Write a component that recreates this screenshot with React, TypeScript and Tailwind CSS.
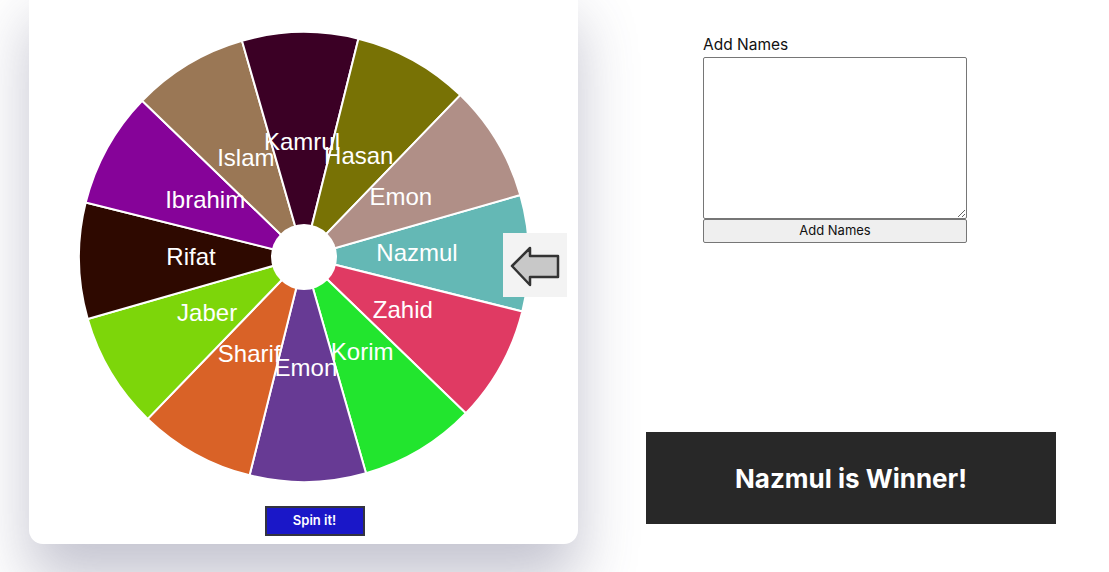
import { useState } from "react";

const segments = [
  { name: "Nazmul", color: "#64b8b5" },
  { name: "Zahid", color: "#e03a63" },
  { name: "Korim", color: "#22e52e" },
  { name: "Emon", color: "#673a94" },
  { name: "Sharif", color: "#d96227" },
  { name: "Jaber", color: "#7dd60a" },
  { name: "Rifat", color: "#2e0900" },
  { name: "Ibrahim", color: "#860399" },
  { name: "Islam", color: "#9a7755" },
  { name: "Kamrul", color: "#3b0025" },
  { name: "Hasan", color: "#787205" },
  { name: "Emon", color: "#b08f87" },
];

const SIZE = 452;
const C = SIZE / 2;
const R = 225;
const OFFSET = -1;

const rad = (deg: number) => (deg * Math.PI) / 180;

const Wheel = () => {
  const step = 360 / segments.length;
  return (
    <svg width={SIZE} height={SIZE} viewBox={`0 0 ${SIZE} ${SIZE}`}>
      {segments.map((seg, i) => {
        const a0 = rad(OFFSET + step * i - step / 2);
        const a1 = rad(OFFSET + step * i + step / 2);
        const d = `M${C},${C} L${C + R * Math.cos(a0)},${C + R * Math.sin(a0)} A${R},${R} 0 0 1 ${C + R * Math.cos(a1)},${C + R * Math.sin(a1)} Z`;
        return <path key={i} d={d} fill={seg.color} stroke="#ffffff" strokeWidth={2} />;
      })}
      {segments.map((seg, i) => {
        const a = rad(OFFSET + step * i);
        return (
          <text
            key={i}
            x={C + 113 * Math.cos(a)}
            y={C + 113 * Math.sin(a) + 6}
            textAnchor="middle"
            fill="#ffffff"
            fontSize={24}
            fontFamily='"Liberation Sans", Arial, sans-serif'
          >
            {seg.name}
          </text>
        );
      })}
      <circle cx={C} cy={C} r={33} fill="#ffffff" />
    </svg>
  );
};

export default function App() {
  const [names, setNames] = useState("");

  return (
    <div className="w-[1109px] h-[572px] overflow-hidden bg-white flex" style={{ fontFamily: "Inter, 'Open Sans', sans-serif" }}>
      {/* wheel card */}
      <div className="relative ml-[29px] mt-[-16px] w-[549px] h-[560px] shrink-0 bg-white rounded-[14px] shadow-[0_36px_60px_0_rgba(70,70,110,0.32)] flex flex-col items-center pt-[47px]">
        <Wheel />
        <button className="mt-[23px] ml-[22px] w-[100px] h-[30px] bg-[#1a17c8] border-2 border-[#333340] text-white text-[13px] font-semibold">
          Spin it!
        </button>
        <div className="absolute left-[474px] top-[249px] w-[64px] h-[64px] bg-[#f3f3f3]">
          <svg width="64" height="64" viewBox="0 0 64 64">
            <polygon
              points="9,33 27,15 27,23 55,23 55,44 27,44 27,52"
              fill="#c8c8c8"
              stroke="#333333"
              strokeWidth={2.5}
              strokeLinejoin="round"
            />
          </svg>
        </div>
      </div>

      {/* right side */}
      <div className="flex flex-col">
        <div className="ml-[125px] mt-[34px] w-[264px] flex flex-col">
          <label className="text-[15.5px] leading-[22px] text-[#111]">Add Names</label>
          <textarea
            value={names}
            onChange={(e) => setNames(e.target.value)}
            className="mt-[1px] h-[162px] w-[264px] border border-[#767676] rounded-[2px] bg-white"
          />
          <button className="h-[24px] w-[264px] border border-[#767676] rounded-[2px] bg-[#efefef] text-[13px] text-[#111]">
            Add Names
          </button>
        </div>
        <div className="ml-[68px] mt-[189px] w-[410px] h-[92px] bg-[#282828] flex items-center justify-center">
          <span className="text-white text-[26px] font-bold">Nazmul is Winner!</span>
        </div>
      </div>
    </div>
  );
}
